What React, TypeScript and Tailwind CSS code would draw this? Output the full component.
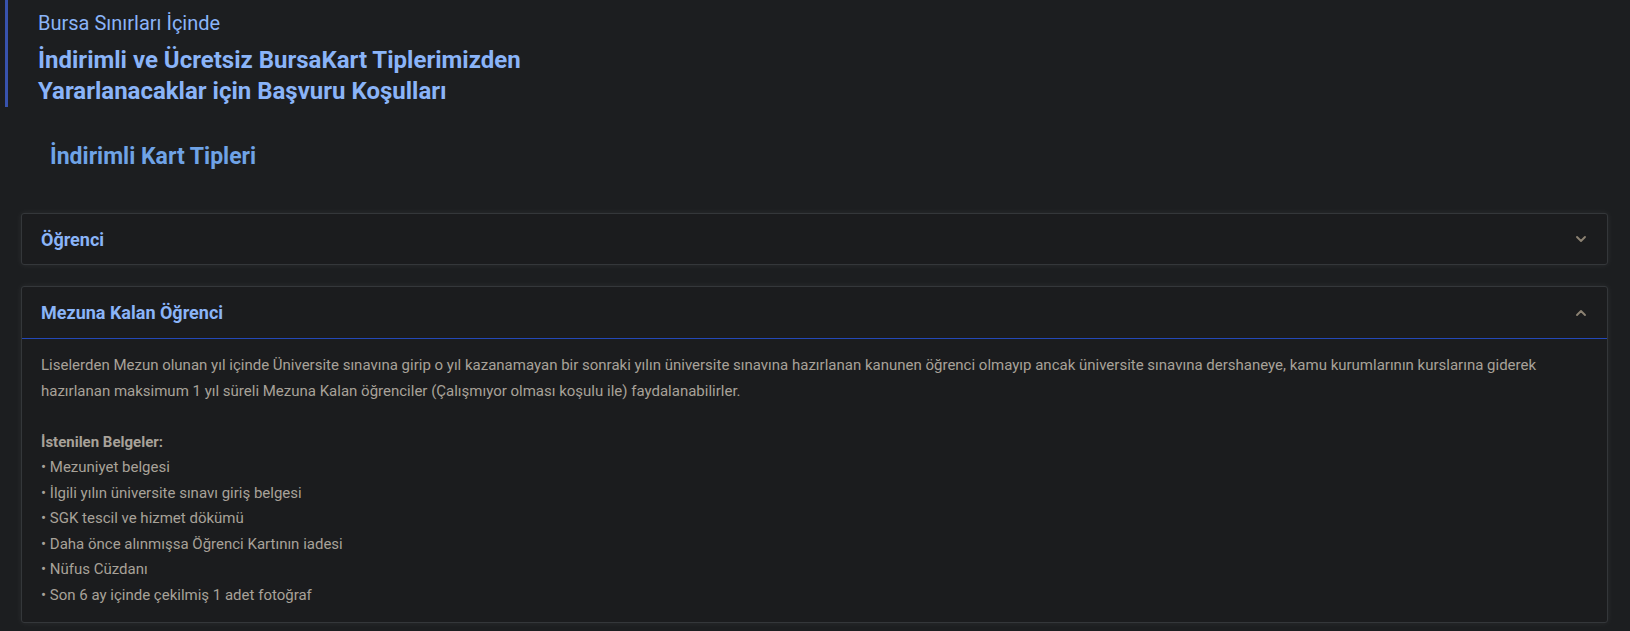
import React, { useState } from 'react';

const BELGELER = [
  'Mezuniyet belgesi',
  'İlgili yılın üniversite sınavı giriş belgesi',
  'SGK tescil ve hizmet dökümü',
  'Daha önce alınmışsa Öğrenci Kartının iadesi',
  'Nüfus Cüzdanı',
  'Son 6 ay içinde çekilmiş 1 adet fotoğraf',
];

function Chevron({ up }: { up: boolean }) {
  return (
    <svg width="16" height="16" viewBox="0 0 24 24" fill="none" stroke="#8c8273" strokeWidth="2.8" strokeLinecap="round" strokeLinejoin="round">
      {up ? <path d="M6 15l6-6 6 6" /> : <path d="M6 9l6 6 6-6" />}
    </svg>
  );
}

export default function App() {
  const [open, setOpen] = useState<string | null>('mezun');

  return (
    <div className="min-h-[631px] bg-[#1c1e20] text-[#a8a299]" style={{ fontFamily: 'Roboto, "Noto Sans", sans-serif' }}>
      {/* Page header */}
      <div className="pl-[5px]">
        <div className="border-l-[3px] border-[#3853ad] pl-[30px] pt-[9px]">
          <div className="text-[20px] leading-[28px] text-[#8ab4f8]">Bursa Sınırları İçinde</div>
          <h1 className="mt-[8px] text-[24px] leading-[31px] font-bold text-[#8ab4f8]">
            İndirimli ve Ücretsiz BursaKart Tiplerimizden
            <br />
            Yararlanacaklar için Başvuru Koşulları
          </h1>
        </div>
      </div>

      <h2 className="pl-[50px] pt-[36px] text-[23px] leading-[28px] font-bold text-[#6fa3e6]">İndirimli Kart Tipleri</h2>

      <div className="pl-[21px] pr-[22px] pt-[42px] flex flex-col gap-[21px]">
        {/* Öğrenci */}
        <div className="rounded-[3px] border border-[#34373a] bg-[#1b1c1e] shadow-[0_0_6px_rgba(255,255,255,0.07)]">
          <button
            onClick={() => setOpen(open === 'ogrenci' ? null : 'ogrenci')}
            className="w-full h-[50px] flex items-center justify-between pl-[19px] pr-[18px]"
          >
            <span className="text-[18px] font-bold text-[#8ab4f8]">Öğrenci</span>
            <Chevron up={open === 'ogrenci'} />
          </button>
        </div>

        {/* Mezuna Kalan Öğrenci */}
        <div className="rounded-[3px] border border-[#34373a] bg-[#1b1c1e] shadow-[0_0_6px_rgba(255,255,255,0.07)]">
          <button
            onClick={() => setOpen(open === 'mezun' ? null : 'mezun')}
            className="w-full h-[52px] flex items-center justify-between pl-[19px] pr-[18px] border-b border-[#2448b8]"
          >
            <span className="text-[18px] font-bold text-[#8ab4f8]">Mezuna Kalan Öğrenci</span>
            <Chevron up={open === 'mezun'} />
          </button>
          {open === 'mezun' && (
            <div className="px-[19px] pt-[14px] pb-[14px] text-[15px] leading-[25.5px] text-[#a8a299]">
              <p>
                Liselerden Mezun olunan yıl içinde Üniversite sınavına girip o yıl kazanamayan bir sonraki yılın üniversite sınavına hazırlanan kanunen öğrenci olmayıp ancak üniversite sınavına dershaneye, kamu kurumlarının kurslarına giderek hazırlanan maksimum 1 yıl süreli Mezuna Kalan öğrenciler (Çalışmıyor olması koşulu ile) faydalanabilirler.
              </p>
              <p className="mt-[25.5px] font-bold">İstenilen Belgeler:</p>
              <ul>
                {BELGELER.map(b => (
                  <li key={b}>• {b}</li>
                ))}
              </ul>
            </div>
          )}
        </div>
      </div>
    </div>
  );
}
